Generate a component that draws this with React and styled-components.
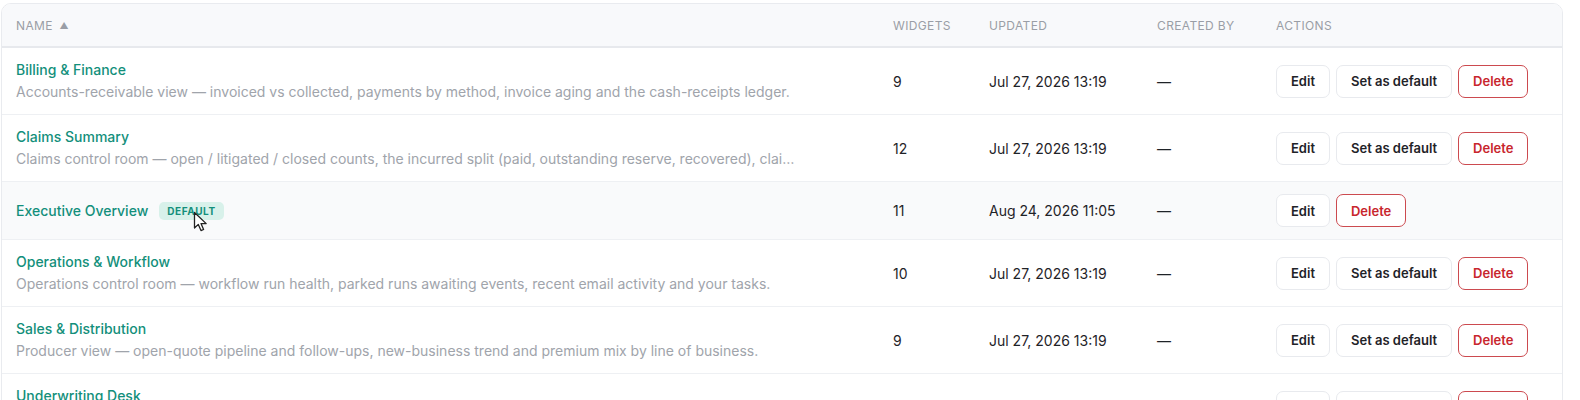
import React from "react";
import styled, { createGlobalStyle } from "styled-components";

const GlobalStyle = createGlobalStyle`
  body {
    margin: 0;
    background: #ffffff;
    font-family: Inter, "Noto Sans", sans-serif;
    -webkit-font-smoothing: antialiased;
  }
`;

const dashboards = [
  {
    name: "Billing & Finance",
    description:
      "Accounts-receivable view — invoiced vs collected, payments by method, invoice aging and the cash-receipts ledger.",
    widgets: 9,
    updated: "Jul 27, 2026 13:19",
  },
  {
    name: "Claims Summary",
    description:
      "Claims control room — open / litigated / closed counts, the incurred split (paid, outstanding reserve, recovered), claims by status and adjuster workload.",
    widgets: 12,
    updated: "Jul 27, 2026 13:19",
  },
  {
    name: "Executive Overview",
    isDefault: true,
    widgets: 11,
    updated: "Aug 24, 2026 11:05",
  },
  {
    name: "Operations & Workflow",
    description:
      "Operations control room — workflow run health, parked runs awaiting events, recent email activity and your tasks.",
    widgets: 10,
    updated: "Jul 27, 2026 13:19",
  },
  {
    name: "Sales & Distribution",
    description:
      "Producer view — open-quote pipeline and follow-ups, new-business trend and premium mix by line of business.",
    widgets: 9,
    updated: "Jul 27, 2026 13:19",
  },
  {
    name: "Underwriting Desk",
    description:
      "Underwriting view — submissions in review, referrals, quote turnaround and bound premium by underwriter.",
    widgets: 8,
    updated: "Jul 27, 2026 13:19",
  },
];

function Cursor() {
  return (
    <CursorMark width="16" height="22" viewBox="0 0 16 22">
      <path
        d="M1.5 1.5 L1.5 17 L5.3 13.4 L8 19.6 L10.6 18.5 L8 12.6 L13.2 12.6 Z"
        fill="#ffffff"
        stroke="#222222"
        strokeWidth="1.3"
        strokeLinejoin="round"
      />
    </CursorMark>
  );
}

export default function App() {
  return (
    <Page>
      <GlobalStyle />
      <Card>
        <Table>
          <colgroup>
            <col style={{ width: 877 }} />
            <col style={{ width: 96 }} />
            <col style={{ width: 168 }} />
            <col style={{ width: 119 }} />
            <col />
          </colgroup>
          <thead>
            <tr>
              <Th>
                Name <SortArrow>▲</SortArrow>
              </Th>
              <Th>Widgets</Th>
              <Th>Updated</Th>
              <Th>Created by</Th>
              <Th>Actions</Th>
            </tr>
          </thead>
          <tbody>
            {dashboards.map((d) => (
              <Row key={d.name} $hover={d.isDefault}>
                <Td>
                  <NameLine>
                    <Title>{d.name}</Title>
                    {d.isDefault && (
                      <Badge>
                        Default
                        <Cursor />
                      </Badge>
                    )}
                  </NameLine>
                  {d.description && <Description>{d.description}</Description>}
                </Td>
                <Td>{d.widgets}</Td>
                <Td>{d.updated}</Td>
                <Td>—</Td>
                <Td>
                  <Actions>
                    <Button>Edit</Button>
                    {!d.isDefault && <Button>Set as default</Button>}
                    <Button $danger>Delete</Button>
                  </Actions>
                </Td>
              </Row>
            ))}
          </tbody>
        </Table>
      </Card>
    </Page>
  );
}

const Page = styled.div`
  padding: 3px 17px 0 1px;
  height: 400px;
  overflow: hidden;
  box-sizing: border-box;
`;

const Card = styled.div`
  border: 1px solid #e9ebef;
  border-radius: 10px;
  overflow: hidden;
  background: #ffffff;
`;

const Table = styled.table`
  width: 100%;
  border-collapse: collapse;
  table-layout: fixed;
`;

const Th = styled.th`
  height: 42px;
  padding: 0 14px;
  text-align: left;
  font-size: 12px;
  font-weight: 400;
  letter-spacing: 0.03em;
  text-transform: uppercase;
  color: #9a9ea6;
  background: #f8f9fb;
  border-bottom: 2px solid #e7e9ed;
  white-space: nowrap;
`;

const SortArrow = styled.span`
  margin-left: 3px;
  font-size: 9px;
  vertical-align: 1px;
`;

const Row = styled.tr`
  background: ${(p) => (p.$hover ? "#f9fafb" : "#ffffff")};
  border-bottom: 1px solid #eef0f3;
`;

const Td = styled.td`
  padding: 12px 14px;
  font-size: 14px;
  color: #1f2328;
  vertical-align: middle;
  white-space: nowrap;
`;

const NameLine = styled.div`
  display: flex;
  align-items: center;
  gap: 11px;
  line-height: 20px;
`;

const Title = styled.span`
  color: #138f7b;
  font-size: 14px;
  font-weight: 500;
`;

const Description = styled.div`
  margin-top: 2px;
  max-width: 781px;
  line-height: 20px;
  font-size: 14px;
  color: #a0a4ab;
  overflow: hidden;
  text-overflow: ellipsis;
`;

const Badge = styled.span`
  position: relative;
  display: inline-flex;
  align-items: center;
  height: 18px;
  padding: 0 8px;
  border-radius: 5px;
  background: #d8f1ea;
  color: #138f7b;
  font-size: 10px;
  font-weight: 700;
  letter-spacing: 0.06em;
  text-transform: uppercase;
`;

const CursorMark = styled.svg`
  position: absolute;
  left: 34px;
  top: 9px;
`;

const Actions = styled.div`
  display: flex;
  align-items: center;
  gap: 6px;
`;

const Button = styled.button`
  height: 33px;
  padding: 0 14px;
  border-radius: 7px;
  border: 1px solid ${(p) => (p.$danger ? "#cc4a4f" : "#e8eaee")};
  background: #ffffff;
  color: ${(p) => (p.$danger ? "#c8262d" : "#1f2328")};
  font-family: Inter, "Noto Sans", sans-serif;
  font-size: 13px;
  font-weight: 600;
  cursor: pointer;
`;
